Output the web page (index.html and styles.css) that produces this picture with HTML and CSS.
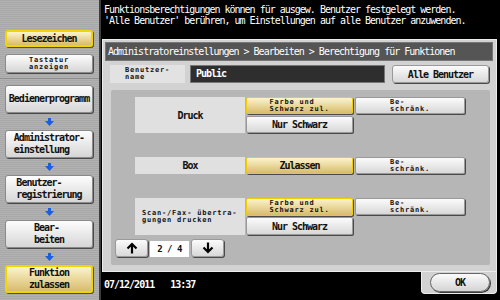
FILE: index.html
```html
<!DOCTYPE html>
<html>
<head>
    <title>Berechtigung für Funktionen</title>
    <link rel="stylesheet" href="styles.css">
</head>
<body>
    <div class="sidebar">
        <div class="side-top">
            <div class="side-btn yellow short">Lesezeichen</div>
            <div class="side-btn small-btn"><span class="small">Tastatur<br>anzeigen</span></div>
        </div>
        <div class="side-flow">
            <div class="side-btn tall">Bedienerprogramm</div>
            <svg class="down" width="9" height="8" viewBox="0 0 9 8"><polygon points="3,0 6,0 6,3 9,3 4.5,8 0,3 3,3"/></svg>
            <div class="side-btn tall"><span>Administrator-<br>einstellung</span></div>
            <svg class="down" width="9" height="8" viewBox="0 0 9 8"><polygon points="3,0 6,0 6,3 9,3 4.5,8 0,3 3,3"/></svg>
            <div class="side-btn tall"><span>Benutzer-<br>registrierung</span></div>
            <svg class="down" width="9" height="8" viewBox="0 0 9 8"><polygon points="3,0 6,0 6,3 9,3 4.5,8 0,3 3,3"/></svg>
            <div class="side-btn tall"><span>Bear-<br>beiten</span></div>
            <svg class="down" width="9" height="8" viewBox="0 0 9 8"><polygon points="3,0 6,0 6,3 9,3 4.5,8 0,3 3,3"/></svg>
            <div class="side-btn tall yellow"><span>Funktion<br>zulassen</span></div>
        </div>
    </div>

    <div class="main">
        <div class="message">Funktionsberechtigungen können für ausgew. Benutzer festgelegt werden.<br>'Alle Benutzer' berühren, um Einstellungen auf alle Benutzer anzuwenden.</div>

        <div class="panel">
            <div class="title">Administratoreinstellungen &gt; Bearbeiten &gt; Berechtigung für Funktionen</div>

            <div class="user-row">
                <div class="user-label"><span class="small">Benutzer-<br>name</span></div>
                <div class="user-field">Public</div>
                <div class="btn all-btn">Alle Benutzer</div>
            </div>

            <div class="content">
                <div class="row double">
                    <div class="label">Druck</div>
                    <div class="choices">
                        <div class="btn yellow"><span class="small">Farbe und<br>Schwarz zul.</span></div>
                        <div class="btn">Nur Schwarz</div>
                    </div>
                    <div class="btn restrict"><span class="small">Be-<br>schränk.</span></div>
                </div>

                <div class="row single">
                    <div class="label">Box</div>
                    <div class="choices">
                        <div class="btn yellow">Zulassen</div>
                    </div>
                    <div class="btn restrict"><span class="small">Be-<br>schränk.</span></div>
                </div>

                <div class="row double scan">
                    <div class="label left"><span class="small">Scan-/Fax- übertra-<br>gungen drucken</span></div>
                    <div class="choices">
                        <div class="btn yellow"><span class="small">Farbe und<br>Schwarz zul.</span></div>
                        <div class="btn">Nur Schwarz</div>
                    </div>
                    <div class="btn restrict"><span class="small">Be-<br>schränk.</span></div>
                </div>

                <div class="pager">
                    <div class="btn page-btn">
                        <svg width="12" height="12" viewBox="0 0 12 12"><path d="M6 11.5 V2 M1.5 6.5 L6 2 L10.5 6.5"/></svg>
                    </div>
                    <div class="page-num">2 / 4</div>
                    <div class="btn page-btn">
                        <svg width="12" height="12" viewBox="0 0 12 12"><path d="M6 0.5 V10 M1.5 5.5 L6 10 L10.5 5.5"/></svg>
                    </div>
                </div>
            </div>
        </div>

        <div class="footer">
            <span class="date">07/12/2011</span>
            <span class="time">13:37</span>
            <div class="ok-tab">
                <div class="ok-btn">OK</div>
            </div>
        </div>
    </div>
</body>
</html>
```

FILE: styles.css
```css
body {
    margin: 0;
    width: 500px;
    height: 300px;
    overflow: hidden;
    background-color: #000;
    display: flex;
    font-family: "DejaVu Sans Mono", "Liberation Mono", monospace;
    color: #111;
}

/* left navigation */
.sidebar {
    width: 101px;
    box-sizing: border-box;
    border-right: 2px solid #3c3c3c;
    background: repeating-linear-gradient(#a8a8a8 0px, #a8a8a8 1px, #b2b2b2 1px, #b2b2b2 2px);
}

.side-top {
    height: 79px;
    box-sizing: border-box;
    padding: 30px 0 0 5px;
    border-bottom: 1px solid #8c8c8c;
}

.side-flow {
    padding: 6px 0 0 5px;
    display: flex;
    flex-direction: column;
}

.side-btn {
    width: 88px;
    box-sizing: border-box;
    display: flex;
    align-items: center;
    justify-content: center;
    border: 1px solid #8a8a8a;
    border-radius: 3px;
    background: linear-gradient(#fdfdfd, #d6d6d6);
    box-shadow: 1px 1px 0 #4a4a4a;
    font-size: 10px;
    font-weight: bold;
    letter-spacing: -1px;
    line-height: 12px;
}

.side-btn span {
    text-align: left;
}

.side-btn.short {
    height: 17px;
}

.side-btn.small-btn {
    height: 19px;
    margin-top: 7px;
}

.side-btn.small-btn span {
    text-align: center;
}

.side-btn.tall {
    height: 28px;
}

.down {
    display: block;
    margin: 5px 0 4px 40px;
    fill: #1a5fe0;
}

.yellow {
    background: linear-gradient(#fcf4cc, #d8bc6c);
    border: 1px solid #f0cc00;
}

.side-btn.yellow {
    border: 2px solid #f2d400;
}

.small {
    font-size: 7px;
    font-weight: bold;
    letter-spacing: 0.8px;
    line-height: 7px;
}

/* main area */
.main {
    flex: 1;
    display: flex;
    flex-direction: column;
    margin-left: 1px;
}

.message {
    height: 39px;
    box-sizing: border-box;
    padding: 4px 0 0 2px;
    color: #fff;
    font-size: 10px;
    letter-spacing: -1px;
    line-height: 11px;
    white-space: nowrap;
}

.panel {
    width: 395px;
    height: 233px;
    box-sizing: border-box;
    background-color: #d2d2d2;
    border: 1px solid #ececec;
    padding: 2px 3px 0 2px;
}

.title {
    height: 19px;
    box-sizing: border-box;
    background-color: #555;
    border: 1px solid #777;
    color: #fff;
    font-size: 10px;
    letter-spacing: -1px;
    line-height: 17px;
    padding-left: 2px;
    white-space: nowrap;
}

.user-row {
    display: flex;
    height: 18px;
    margin-top: 4px;
}

.user-label {
    width: 75px;
    margin-left: 5px;
    background-color: #e2e2e2;
    display: flex;
    align-items: center;
    justify-content: center;
}

.user-label span {
    text-align: left;
}

.user-field {
    width: 195px;
    margin-left: 5px;
    box-sizing: border-box;
    background-color: #2e2e2e;
    border: 1px solid #777;
    color: #fff;
    font-size: 10px;
    font-weight: bold;
    letter-spacing: -1px;
    line-height: 16px;
    padding-left: 5px;
}

.btn {
    box-sizing: border-box;
    display: flex;
    align-items: center;
    justify-content: center;
    border: 1px solid #999;
    border-radius: 2px;
    background: linear-gradient(#fbfbfb, #d8d8d8);
    box-shadow: 1px 1px 0 #4a4a4a;
    font-size: 10px;
    font-weight: bold;
    letter-spacing: -1px;
}

.btn.yellow {
    background: linear-gradient(#fcf4cc, #d8bc6c);
    border: 1px solid #f0cc00;
}

.btn .small {
    text-align: left;
}

.all-btn {
    width: 97px;
    margin-left: 7px;
    border-radius: 3px;
}

.content {
    width: 379px;
    height: 175px;
    box-sizing: border-box;
    margin: 7px 0 0 6px;
    padding: 7px 0 0 4px;
    background-color: #b6b6b6;
    border-radius: 2px;
}

.row {
    display: flex;
    margin-left: 20px;
}

.row.double {
    height: 36px;
}

.row.single {
    height: 17px;
    margin-top: 24px;
}

.row.scan {
    height: 37px;
    margin-top: 24px;
}

.label {
    width: 110px;
    background-color: #e0e0e0;
    display: flex;
    align-items: center;
    justify-content: center;
    font-size: 10px;
    font-weight: bold;
    letter-spacing: -1px;
}

.label.left {
    justify-content: flex-start;
    padding-left: 7px;
    box-sizing: border-box;
}

.choices {
    width: 107px;
    margin-left: 1px;
    display: flex;
    flex-direction: column;
    justify-content: space-between;
}

.choices .btn {
    height: 17px;
}

.row.scan .choices .btn {
    height: 18px;
}

.restrict {
    width: 110px;
    height: 17px;
    margin-left: 2px;
}

.pager {
    display: flex;
    align-items: flex-end;
    margin-top: 4px;
}

.page-btn {
    width: 33px;
    height: 18px;
    border-radius: 3px;
}

.page-btn svg {
    fill: none;
    stroke: #000;
    stroke-width: 2.2;
}

.page-num {
    width: 39px;
    height: 16px;
    margin: 0 2px;
    background-color: #fff;
    font-size: 9px;
    font-weight: bold;
    letter-spacing: -0.5px;
    line-height: 16px;
    text-align: center;
}

/* footer with date and OK */
.footer {
    flex: 1;
    display: flex;
    align-items: flex-start;
    color: #fff;
    font-size: 10px;
    font-weight: bold;
    letter-spacing: -1px;
}

.date {
    padding: 7px 0 0 2px;
}

.time {
    padding: 7px 0 0 16px;
}

.ok-tab {
    margin-left: auto;
    margin-right: 3px;
    width: 76px;
    height: 22px;
    box-sizing: border-box;
    background-color: #d2d2d2;
    border: 1px solid #ececec;
    border-top: none;
    border-radius: 0 0 4px 4px;
    padding: 1px 0 0 8px;
}

.ok-btn {
    width: 60px;
    height: 19px;
    box-sizing: border-box;
    border: 1px solid #666;
    border-radius: 10px;
    background: linear-gradient(#fbfbfb, #d4d4d4);
    box-shadow: 1px 1px 0 #3a3a3a;
    color: #111;
    text-align: center;
    line-height: 17px;
    font-size: 10px;
    font-weight: bold;
}
```
